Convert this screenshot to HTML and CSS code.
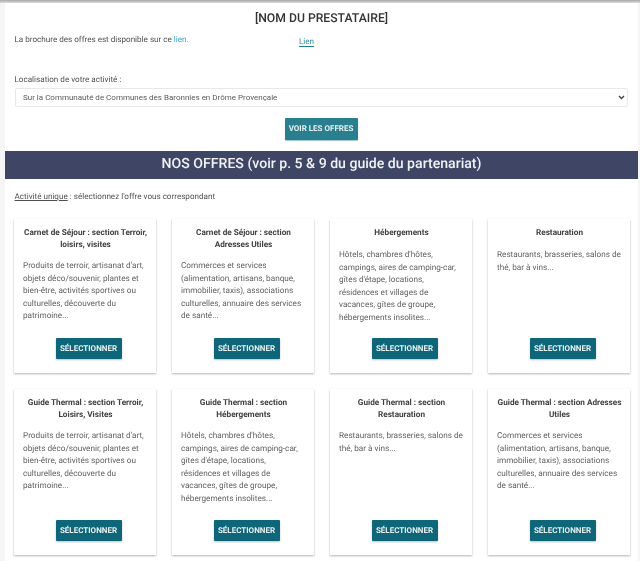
FILE: index.html
```html
<!DOCTYPE html>
<html lang="fr">
<head>
    <title>Nos offres</title>
    <meta charset="utf-8"/>
    <link rel="stylesheet" href="styles.css">
</head>
<body>
<div class="haut"></div>
<div class="page">
    <h1 class="presta">[NOM DU PRESTATAIRE]</h1>
    <div class="brochure">
        <p>La brochure des offres est disponible sur ce <a class="lien_txt" href="#">lien.</a></p>
        <a class="lien_btn" href="#">Lien</a>
    </div>
    <label class="loc_label" for="loc">Localisation de votre activité :</label>
    <div class="loc_wrap">
        <select class="loc_select" id="loc">
            <option>Sur la Communauté de Communes des Baronnies en Drôme Provençale</option>
        </select>
        <svg class="loc_fleche" width="7" height="5" viewBox="0 0 7 5"><path d="M1 1l2.5 2.5L6 1" fill="none" stroke="#444444" stroke-width="1.4"/></svg>
    </div>
    <div class="voir"><a class="btn_voir" href="#">VOIR LES OFFRES</a></div>
    <h2 class="bandeau">NOS OFFRES (voir p. 5 &amp; 9 du guide du partenariat)</h2>
    <p class="consigne"><u>Activité unique</u> : sélectionnez l'offre vous correspondant</p>

    <div class="offres offres_1">
        <div class="carte">
            <h3>Carnet de Séjour : section Terroir, loisirs, visites</h3>
            <p>Produits de terroir, artisanat d'art, objets déco/souvenir, plantes et bien-être, activités sportives ou culturelles, découverte du patrimoine...</p>
            <a class="btn_sel" href="#">SÉLECTIONNER</a>
        </div>
        <div class="carte">
            <h3>Carnet de Séjour : section Adresses Utiles</h3>
            <p>Commerces et services (alimentation, artisans, banque, immobilier, taxis), associations culturelles, annuaire des services de santé...</p>
            <a class="btn_sel" href="#">SÉLECTIONNER</a>
        </div>
        <div class="carte">
            <h3 class="seul">Hébergements</h3>
            <p>Hôtels, chambres d'hôtes, campings, aires de camping-car, gîtes d'étape, locations, résidences et villages de vacances, gîtes de groupe, hébergements insolites...</p>
            <a class="btn_sel" href="#">SÉLECTIONNER</a>
        </div>
        <div class="carte">
            <h3 class="seul">Restauration</h3>
            <p>Restaurants, brasseries, salons de thé, bar à vins...</p>
            <a class="btn_sel" href="#">SÉLECTIONNER</a>
        </div>
    </div>

    <div class="offres offres_2">
        <div class="carte">
            <h3>Guide Thermal : section Terroir, Loisirs, Visites</h3>
            <p>Produits de terroir, artisanat d'art, objets déco/souvenir, plantes et bien-être, activités sportives ou culturelles, découverte du patrimoine...</p>
            <a class="btn_sel" href="#">SÉLECTIONNER</a>
        </div>
        <div class="carte">
            <h3>Guide Thermal : section Hébergements</h3>
            <p>Hôtels, chambres d'hôtes, campings, aires de camping-car, gîtes d'étape, locations, résidences et villages de vacances, gîtes de groupe, hébergements insolites...</p>
            <a class="btn_sel" href="#">SÉLECTIONNER</a>
        </div>
        <div class="carte">
            <h3>Guide Thermal : section Restauration</h3>
            <p>Restaurants, brasseries, salons de thé, bar à vins...</p>
            <a class="btn_sel" href="#">SÉLECTIONNER</a>
        </div>
        <div class="carte">
            <h3>Guide Thermal : section Adresses Utiles</h3>
            <p>Commerces et services (alimentation, artisans, banque, immobilier, taxis), associations culturelles, annuaire des services de santé...</p>
            <a class="btn_sel" href="#">SÉLECTIONNER</a>
        </div>
    </div>
</div>
</body>
</html>
```

FILE: styles.css
```css
*{margin:0;padding:0;box-sizing:border-box;}
html,body{height:561px;overflow:hidden;}
body{
    background:#f6f6f6;
    font-family:Roboto,"Liberation Sans",sans-serif;
    color:#505050;
    font-size:8.1px;
    text-rendering:geometricPrecision;
}
.haut{
    height:3px;
    background:linear-gradient(#a8a8a8,#dcdcdc);
}
.page{
    background:#ffffff;
    margin:0 2px 0 5px;
    height:558px;
    filter:blur(0.4px);
}
.presta{
    font-size:12.2px;
    font-weight:500;
    line-height:14px;
    color:#333333;
    text-align:center;
    padding-top:8px;
    height:25px;
}
.brochure{
    display:flex;
    height:38px;
    padding:6px 0 0 9.5px;
}
.brochure p{
    width:284.5px;
    line-height:10px;
}
.lien_txt{
    color:#35a3d0;
    text-decoration:none;
}
.lien_btn{
    margin-top:3px;
    height:10px;
    line-height:9px;
    color:#2a8ca0;
    border-bottom:1px solid #1f7f93;
    text-decoration:none;
}
.loc_label{
    display:block;
    padding-left:9.5px;
    line-height:10px;
    margin-top:8px;
}
.loc_wrap{
    position:relative;
    width:613px;
    height:19px;
    margin:4px 0 0 10px;
}
.loc_select{
    display:block;
    width:100%;
    height:19px;
    padding-left:7px;
    appearance:none;
    background:#ffffff;
    border:1px solid #e8e8e8;
    border-radius:2px;
    font-family:Roboto,"Liberation Sans",sans-serif;
    font-size:8px;
    color:#5a5a5a;
}
.loc_fleche{
    position:absolute;
    right:3px;
    top:7px;
}
.voir{
    display:flex;
    justify-content:center;
    margin-top:11px;
    height:23px;
}
.btn_voir{
    width:73px;
    height:22px;
    line-height:21px;
    margin-left:-1px;
    text-align:center;
    font-size:8px;
    font-weight:700;
    color:#e4f1f3;
    background:#2a7f8e;
    border-radius:1px;
    box-shadow:0 1px 1px #9cc4cb;
    text-decoration:none;
}
.bandeau{
    margin-top:10px;
    height:28px;
    line-height:27px;
    background:#3e4565;
    color:#f2f2f5;
    font-size:14.1px;
    font-weight:500;
    text-align:center;
}
.consigne{
    padding-left:9.5px;
    line-height:10px;
    margin-top:12px;
}
.offres{
    display:grid;
    grid-template-columns:repeat(4,142px);
    column-gap:16px;
    padding-left:9px;
}
.offres_1{margin-top:18px;height:154px;}
.offres_2{margin-top:16px;height:166px;}
.carte{
    display:flex;
    flex-direction:column;
    align-items:center;
    padding:8px 8px 0 9px;
    background:#ffffff;
    box-shadow:0 1px 2px rgba(0,0,0,0.3);
}
.offres_2 .carte{padding-top:9px;}
.carte h3{
    width:100%;
    font-size:8.2px;
    font-weight:700;
    line-height:12px;
    color:#404040;
    text-align:center;
}
.carte p{
    width:100%;
    margin-top:9px;
    line-height:12.5px;
    font-size:8.2px;
    color:#5e5e5e;
    flex:1;
}
.offres_2 .carte h3{line-height:11.5px;}
.carte h3.seul{height:13px;}
.btn_sel{
    width:66px;
    height:21px;
    line-height:21px;
    margin:0 0 14px 6px;
    text-align:center;
    font-size:8px;
    font-weight:700;
    color:#e4f1f3;
    background:#0f6679;
    border-radius:1px;
    box-shadow:0 1px 2px rgba(0,0,0,0.25);
    text-decoration:none;
}
```
